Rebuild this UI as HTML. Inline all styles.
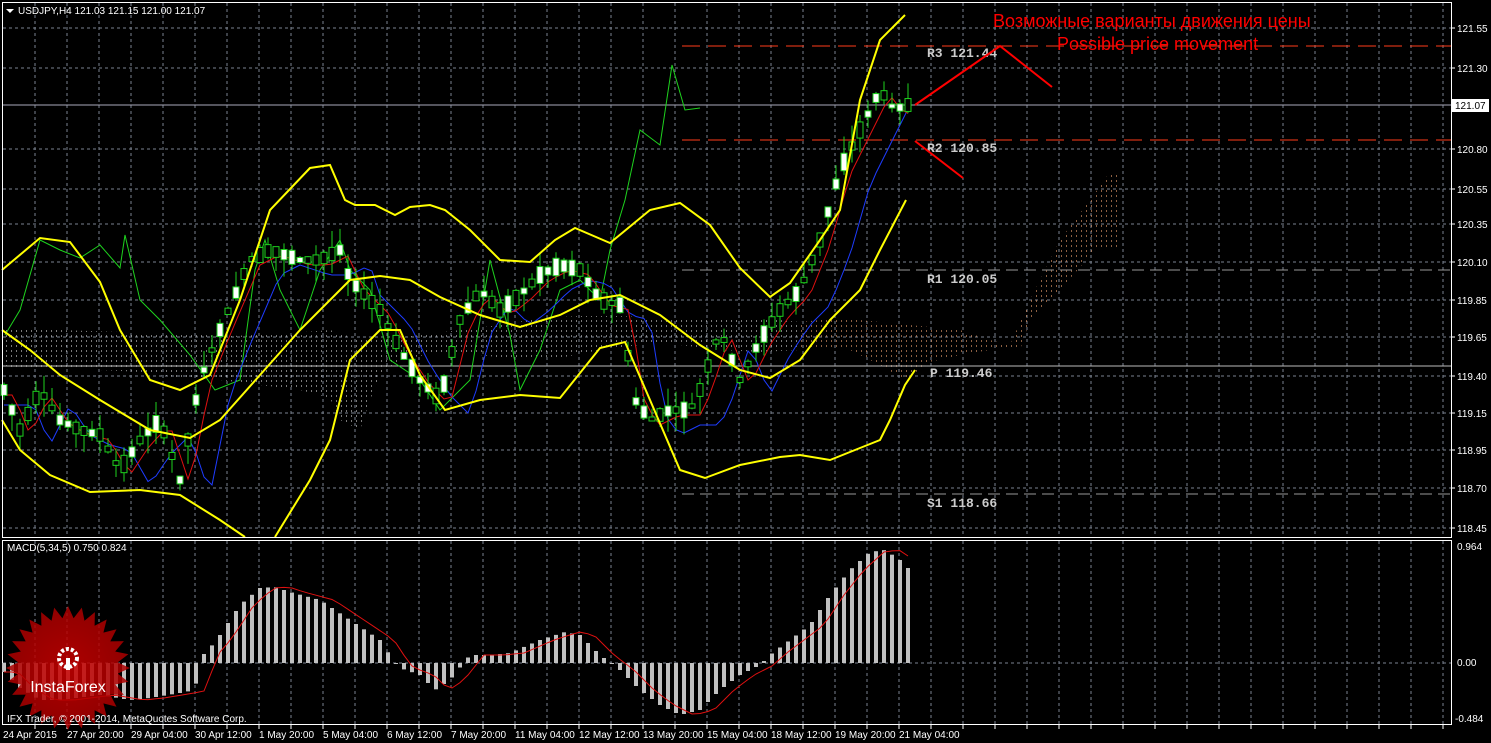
<!DOCTYPE html>
<html><head><meta charset="utf-8"><style>
html,body{margin:0;padding:0;background:#000;width:1491px;height:743px;overflow:hidden}
svg{display:block}
text{font-family:"Liberation Sans",sans-serif}
.ax{fill:#fff;font-size:10px}
.mono{font-family:"Liberation Mono",monospace;font-size:13px;fill:#ccc;font-weight:bold}
</style></head><body>
<svg id="s" width="1491" height="743" xmlns="http://www.w3.org/2000/svg">
<defs>
<pattern id="hw" width="5" height="5" patternUnits="userSpaceOnUse"><rect x="1" y="0" width="1" height="2" fill="#ccc"/></pattern>
<pattern id="ho" width="5" height="5" patternUnits="userSpaceOnUse"><rect x="1" y="0" width="1" height="2" fill="#e9a070"/></pattern>
<radialGradient id="rg"><stop offset="0" stop-color="#c00"/><stop offset="1" stop-color="#a00"/></radialGradient>
</defs>
<g id="grid"></g>
<polygon fill="url(#hw)" opacity="0.6" points="2,328 60,330 120,332 180,334 230,336 280,334 330,330 360,340 380,340 420,335 460,330 500,325 540,318 580,316 620,316 660,318 700,320 740,318 780,320 800,322 800,350 760,352 720,350 680,345 640,345 600,350 560,358 520,360 480,355 440,352 400,360 380,375 370,400 360,430 340,420 330,398 300,390 260,385 220,380 180,378 140,372 100,370 60,370 20,368 2,366"/>
<polygon fill="url(#ho)" opacity="0.6" points="800,322 840,318 880,322 920,326 960,330 990,340 1010,345 1030,300 1060,240 1090,200 1110,172 1118,172 1118,250 1095,250 1060,290 1030,320 1020,350 990,350 960,355 930,362 905,380 880,365 850,350 800,350"/>
<line x1="682" y1="46" x2="1451" y2="46" stroke="#ff3b1a" stroke-width="1" stroke-dasharray="18,8"/>
<line x1="682" y1="140" x2="1451" y2="140" stroke="#ff3b1a" stroke-width="1" stroke-dasharray="18,8"/>
<line x1="682" y1="270" x2="1451" y2="270" stroke="#999" stroke-width="1" stroke-dasharray="12,6"/>
<line x1="2" y1="366" x2="1451" y2="366" stroke="#bbb" stroke-width="1"/>
<line x1="682" y1="494" x2="1451" y2="494" stroke="#999" stroke-width="1" stroke-dasharray="12,6"/>
<line x1="2" y1="105" x2="1451" y2="105" stroke="#aab" stroke-width="1"/>
<g id="ind"></g>
<g id="candles"></g>
<g id="yel"></g>
<text x="927" y="57" class="mono">R3 121.44</text>
<text x="927" y="152" class="mono">R2 120.85</text>
<text x="927" y="283" class="mono">R1 120.05</text>
<text x="930" y="377" class="mono">P 119.46</text>
<text x="927" y="507" class="mono">S1 118.66</text>
<polyline points="915,105 1000,46 1052,87" fill="none" stroke="#f00" stroke-width="2"/>
<line x1="915" y1="141" x2="963" y2="178" stroke="#f00" stroke-width="2"/>
<text x="993" y="27" fill="#f00" font-size="18">Возможные варианты движения цены</text>
<text x="1057" y="50" fill="#f00" font-size="18">Possible price movement</text>
<rect x="2.5" y="2.5" width="1449" height="535" fill="none" stroke="#fff"/>
<rect x="2.5" y="540.5" width="1449" height="184" fill="none" stroke="#fff"/>
<polygon points="6,9 14,9 10,13" fill="#fff"/>
<text x="18" y="14" class="ax">USDJPY,H4  121.03 121.15 121.00 121.07</text>
<text x="7" y="551" class="ax" font-size="9">MACD(5,34,5) 0.750 0.824</text>
<g id="macd"></g>
<g transform="translate(68,668)">
<polygon id="star" fill="url(#rg)" opacity="0.85" points=""/>
<circle cx="0" cy="-10" r="9" fill="none" stroke="#fff" stroke-width="4" stroke-dasharray="3,2"/>
<rect x="-2" y="-10" width="4" height="12" fill="#fff"/>
<text x="0" y="24" text-anchor="middle" fill="#fff" font-size="16">InstaForex</text>
</g>
<text x="7" y="722" fill="#fff" font-size="10">IFX Trader, © 2001-2014, MetaQuotes Software Corp.</text>
<g class="ax" id="yax"></g>
<rect x="1452" y="99" width="37" height="13" fill="#fff"/>
<text x="1455" y="109" font-size="10" fill="#000">121.07</text>
<text x="1457" y="550" class="ax">0.964</text>
<text x="1457" y="666" class="ax">0.00</text>
<text x="1455" y="722" class="ax">-0.484</text>
<g class="ax">
<text x="3" y="738">24 Apr 2015</text><text x="67" y="738">27 Apr 20:00</text><text x="131" y="738">29 Apr 04:00</text><text x="195" y="738">30 Apr 12:00</text><text x="259" y="738">1 May 20:00</text><text x="323" y="738">5 May 04:00</text><text x="387" y="738">6 May 12:00</text><text x="451" y="738">7 May 20:00</text><text x="515" y="738">11 May 04:00</text><text x="579" y="738">12 May 12:00</text><text x="643" y="738">13 May 20:00</text><text x="707" y="738">15 May 04:00</text><text x="771" y="738">18 May 12:00</text><text x="835" y="738">19 May 20:00</text><text x="899" y="738">21 May 04:00</text>
</g>
</svg>
<script>
var NS="http://www.w3.org/2000/svg";
function el(p,t,a){var e=document.createElementNS(NS,t);for(var k in a)e.setAttribute(k,a[k]);document.getElementById(p).appendChild(e);return e;}
function interp(pts,x){if(x<=pts[0][0])return pts[0][1];for(var i=0;i<pts.length-1;i++){if(x>=pts[i][0]&&x<=pts[i+1][0]){var t=(x-pts[i][0])/(pts[i+1][0]-pts[i][0]);return pts[i][1]+t*(pts[i+1][1]-pts[i][1]);}}return pts[pts.length-1][1];}
function pl(g,pts,c,w){el(g,"polyline",{points:pts.map(function(p){return p.join(",")}).join(" "),fill:"none",stroke:c,"stroke-width":w});}
for(var gx=35;gx<1451;gx+=32){el("grid","line",{x1:gx,y1:3,x2:gx,y2:537,stroke:"#7a8290","stroke-dasharray":"3,3"});el("grid","line",{x1:gx,y1:541,x2:gx,y2:724,stroke:"#7a8290","stroke-dasharray":"3,3"});el("grid","line",{x1:gx,y1:725,x2:gx,y2:729,stroke:"#fff"});}
var ys=[[28,"121.55"],[68,"121.30"],[149,"120.80"],[189,"120.55"],[224,"120.35"],[262,"120.10"],[300,"119.85"],[337,"119.65"],[376,"119.40"],[413,"119.15"],[450,"118.95"],[488,"118.70"],[528,"118.45"]];
ys.forEach(function(a){el("grid","line",{x1:3,y1:a[0],x2:1451,y2:a[0],stroke:"#7a8290","stroke-dasharray":"3,3"});var t=el("yax","text",{x:1457,y:a[0]+4});t.textContent=a[1];el("yax","line",{x1:1451,y1:a[0],x2:1455,y2:a[0],stroke:"#fff"});});
el("grid","line",{x1:3,y1:663,x2:1451,y2:663,stroke:"#7a8290","stroke-dasharray":"3,3"});
pl("ind",[[5,335],[20,310],[40,240],[60,250],[80,258],[100,245],[120,268],[125,235],[140,300],[160,320],[190,355],[215,390],[240,380],[255,270],[265,240],[280,290],[300,330],[320,270],[340,240],[350,270],[370,290],[390,360],[420,380],[440,410],[470,380],[490,260],[510,335],[520,390],[540,350],[560,290],[580,280],[600,300],[610,250],[625,200],[640,130],[660,145],[672,65],[685,110],[700,108]],"#1ed21e",1);
var cp=[[4,390],[20,430],[40,390],[60,420],[80,430],[100,435],[120,470],[140,440],[160,420],[180,480],[200,380],[220,330],[250,260],[270,250],[300,260],[320,260],[340,250],[350,280],[380,310],[400,350],[420,380],[440,400],[460,320],[480,290],[500,310],[520,295],[540,275],[560,265],[580,270],[600,300],[620,305],[635,400],[650,420],[670,410],[690,410],[700,390],[720,330],[740,380],[760,340],[780,310],[800,290],[820,240],[840,170],[860,130],[880,90],[895,110],[905,105]];
var red=[],blue=[];
for(var cx=4;cx<=908;cx+=8){red.push([cx,interp(cp,cx-10)+5]);blue.push([cx,interp(cp,cx-30)+15]);}
pl("ind",blue,"#1e3cff",1);pl("ind",red,"#e01010",1);
var seed=7;function rnd(){seed=(seed*9301+49297)%233280;return seed/233280;}
for(var kx=4;kx<=908;kx+=8){var m=interp(cp,kx),b=4+rnd()*14,up=rnd()>0.5,ty=m-b/2,w1=rnd()*18,w2=rnd()*18;
el("candles","line",{x1:kx,y1:ty-w1,x2:kx,y2:ty+b+w2,stroke:"#1ed21e"});
el("candles","rect",{x:kx-3,y:ty,width:6,height:b,fill:up?"#fff":"#000",stroke:"#1ed21e"});}
pl("yel",[[2,270],[40,238],[70,242],[100,282],[120,330],[150,380],[180,390],[210,375],[240,300],[270,210],[310,168],[330,165],[345,200],[355,205],[375,205],[395,215],[410,207],[430,205],[445,210],[470,230],[500,260],[530,262],[555,240],[575,228],[610,243],[650,210],[680,203],[710,225],[740,268],[770,297],[790,283],[820,240],[840,210],[860,100],[880,40],[895,25],[905,15]],"#ffff00",2);
pl("yel",[[2,330],[30,350],[60,375],[100,400],[150,430],[190,438],[220,420],[260,375],[300,330],[350,280],[380,276],[410,280],[440,297],[480,315],[520,327],[560,315],[590,300],[620,295],[660,315],[700,345],[740,370],[770,378],[800,360],[830,320],[860,290],[880,250],[906,200]],"#ffff00",2);
pl("yel",[[2,420],[20,450],[50,475],[90,492],[140,490],[180,495],[220,520],[245,537]],"#ffff00",2);
pl("yel",[[275,537],[310,480],[330,440],[350,360],[380,330],[400,330],[420,375],[445,410],[480,400],[520,395],[560,398],[600,348],[625,342],[650,400],[680,470],[705,478],[740,465],[780,457],[800,455],[830,460],[860,448],[880,440],[890,420],[905,385],[915,370]],"#ffff00",2);
var mp=[[4,672],[12,680],[20,688],[40,700],[60,700],[100,695],[130,700],[150,698],[180,693],[195,690],[200,658],[210,648],[220,635],[240,605],[260,588],[275,587],[290,592],[320,600],[350,620],[380,640],[395,663],[400,668],[420,675],[435,690],[450,680],[470,655],[490,655],[510,653],[540,640],[565,632],[580,635],[600,655],[620,670],[640,690],[660,705],[680,715],[700,710],[720,690],[740,675],[760,665],[770,655],[790,640],[810,625],[830,595],[850,570],[870,552],[885,550],[900,560],[908,568]];
var sig=[];
for(var mx=4;mx<=908;mx+=8){var v=interp(mp,mx);el("macd","rect",{x:mx-2,y:Math.min(v,663),width:4,height:Math.abs(v-663)||1,fill:"#c0c0c0"});sig.push([mx,interp(mp,mx-14)]);}
pl("macd",sig,"#e01010",1);
var s=[];for(var i=0;i<56;i++){var r=i%2?50:62,a=i*Math.PI/28;s.push((r*Math.cos(a)).toFixed(1)+","+(r*Math.sin(a)).toFixed(1));}
document.getElementById("star").setAttribute("points",s.join(" "));
</script>
</body></html>
